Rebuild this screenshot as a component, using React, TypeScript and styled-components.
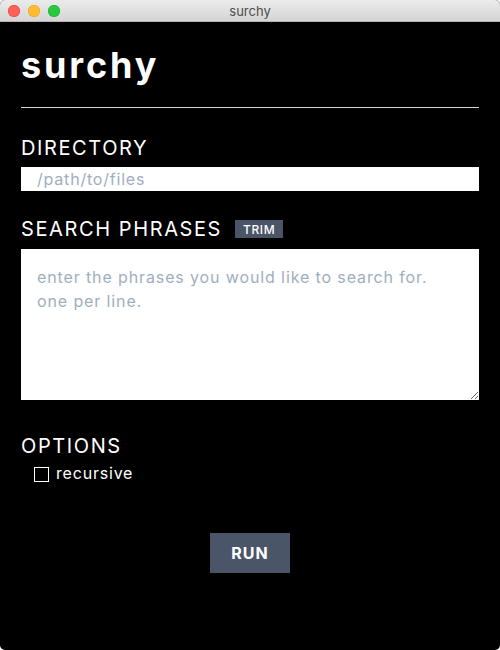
import styled, { createGlobalStyle } from 'styled-components'

const GlobalStyle = createGlobalStyle`
  html, body {
    margin: 0;
    padding: 0;
    background: #ffffff;
  }
  * {
    box-sizing: border-box;
  }
`;

const Window = styled.div`
  width: 500px;
  height: 650px;
  display: flex;
  flex-direction: column;
  border-radius: 5px;
  overflow: hidden;
  background: #000;
  font-family: Inter, "Noto Sans", sans-serif;
`;

const TitleBar = styled.div`
  position: relative;
  height: 22px;
  flex-shrink: 0;
  display: flex;
  align-items: center;
  justify-content: center;
  background: linear-gradient(#ebebeb, #d5d5d5);
  border-bottom: 1px solid #b5b5b5;
  color: #4d4d4d;
  font-size: 13px;
`;

const Lights = styled.div`
  position: absolute;
  left: 8px;
  top: 5px;
  display: flex;
  gap: 8px;
`;

const Light = styled.span<{ color: string; edge: string }>`
  width: 12px;
  height: 12px;
  border-radius: 50%;
  background: ${({ color }) => color};
  box-shadow: inset 0 0 0 0.5px ${({ edge }) => edge};
`;

const Content = styled.main`
  flex: 1;
  display: flex;
  flex-direction: column;
  padding: 22px 21px 0;
  color: #fff;
`;

const Heading = styled.h1`
  margin: 0;
  font-size: 36px;
  line-height: 43px;
  font-weight: 700;
  letter-spacing: 0.08em;
`;

const Rule = styled.hr`
  margin: 20px 0 0;
  border: none;
  border-top: 1px solid #d4d4d4;
`;

const Section = styled.section<{ top: number }>`
  display: flex;
  flex-direction: column;
  margin-top: ${({ top }) => top}px;
`;

const LabelRow = styled.div<{ gap: number }>`
  display: flex;
  align-items: center;
  gap: 13px;
  margin-bottom: ${({ gap }) => gap}px;
`;

const Label = styled.label`
  font-size: 20px;
  line-height: 28px;
  letter-spacing: 0.08em;
  text-transform: uppercase;
`;

const Badge = styled.button`
  height: 18px;
  padding: 0 8px;
  border: none;
  background: #4a5568;
  color: #fff;
  font-family: inherit;
  font-size: 12px;
  font-weight: 500;
  letter-spacing: 0.05em;
`;

const TextInput = styled.input`
  height: 24px;
  width: 100%;
  border: none;
  outline: none;
  padding: 0 16px;
  font-family: inherit;
  font-size: 16px;
  color: #2d3748;
  background: #fff;
  &::placeholder {
    color: #a0aec0;
    letter-spacing: 0.05em;
  }
`;

const TextArea = styled.textarea`
  height: 151px;
  width: 100%;
  border: none;
  outline: none;
  padding: 16px;
  font-family: inherit;
  font-size: 16px;
  line-height: 24px;
  color: #2d3748;
  background: #fff;
  &::placeholder {
    color: #a0aec0;
    letter-spacing: 0.055em;
  }
`;

const CheckRow = styled.label`
  display: flex;
  align-items: center;
  gap: 7px;
  padding-left: 13px;
  font-size: 16px;
  line-height: 24px;
  letter-spacing: 0.05em;
`;

const Check = styled.input`
  appearance: none;
  margin: 0;
  width: 15px;
  height: 15px;
  border: 1px solid #fff;
  background: transparent;
  position: relative;
  top: 1px;
`;

const Actions = styled.div`
  display: flex;
  justify-content: center;
  margin-top: 48px;
`;

const RunButton = styled.button`
  width: 80px;
  height: 40px;
  border: none;
  background: #4a5568;
  color: #fff;
  font-family: inherit;
  font-size: 16px;
  font-weight: 700;
  letter-spacing: 0.06em;
`;

export default function App() {
  return (
    <>
      <GlobalStyle />
      <Window>
        <TitleBar>
          <Lights>
            <Light color="#fe5f57" edge="#e0443e" />
            <Light color="#febc2e" edge="#dea123" />
            <Light color="#28c840" edge="#1aab29" />
          </Lights>
          surchy
        </TitleBar>
        <Content>
          <Heading>surchy</Heading>
          <Rule />
          <Section top={26}>
            <LabelRow gap={5}>
              <Label>Directory</Label>
            </LabelRow>
            <TextInput placeholder="/path/to/files" />
          </Section>
          <Section top={24}>
            <LabelRow gap={6}>
              <Label>Search Phrases</Label>
              <Badge>TRIM</Badge>
            </LabelRow>
            <TextArea placeholder={'enter the phrases you would like to search for.\none per line.'} />
          </Section>
          <Section top={32}>
            <LabelRow gap={1}>
              <Label>Options</Label>
            </LabelRow>
            <CheckRow>
              <Check type="checkbox" />
              recursive
            </CheckRow>
          </Section>
          <Actions>
            <RunButton>RUN</RunButton>
          </Actions>
        </Content>
      </Window>
    </>
  )
}
